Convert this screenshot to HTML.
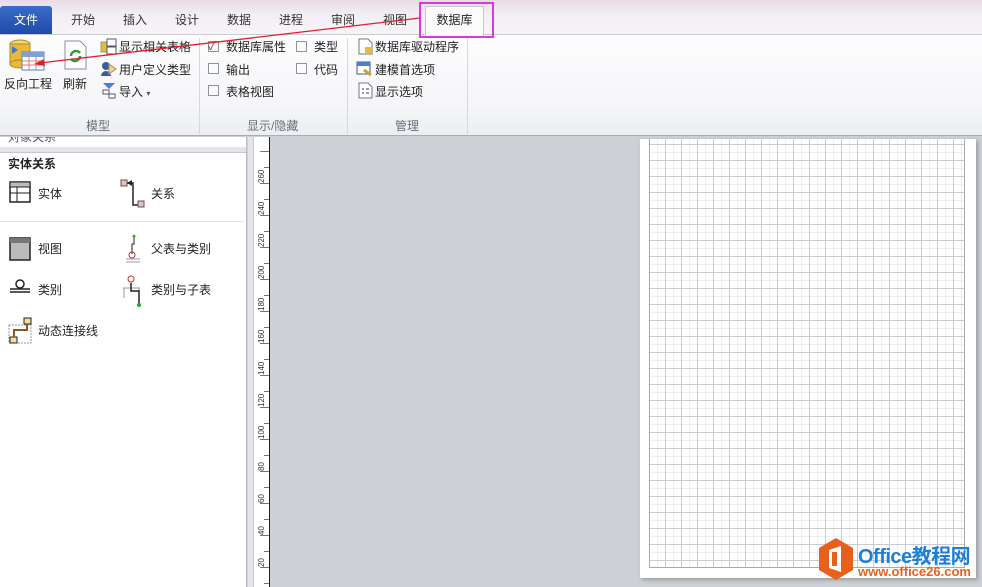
<!DOCTYPE html>
<html><head><meta charset="utf-8"><style>
*{margin:0;padding:0;box-sizing:border-box}
body{width:982px;height:587px;overflow:hidden;position:relative;background:#cdd0d5;font-family:"Liberation Sans","Noto Sans CJK SC",sans-serif;font-size:12px;color:#222}
.abs{position:absolute}
#title{left:0;top:0;width:982px;height:36px;background:linear-gradient(#e9dbe6,#f4eef4 40%,#f7f5f8)}
.tab{position:absolute;top:11px;font-size:12px;color:#333}
#file{left:0;top:6px;width:52px;height:28px;background:linear-gradient(#3b6cc8,#1f4aa8);color:#fff;text-align:center;line-height:28px;border-radius:3px 3px 0 0;font-size:12px}
#dbtab{left:425px;top:6px;width:59px;height:30px;background:#fbfbfc;border:1px solid #c4c8d0;border-bottom:none;text-align:center;line-height:26px}
#mag{left:419px;top:2px;width:75px;height:36px;border:2px solid #d43bd9}
#ribbon{left:0;top:34px;width:982px;height:102px;background:linear-gradient(#fdfdfe,#f5f6f8 70%,#eceef1);border-top:1px solid #c9ccd2;border-bottom:1px solid #a9adb5}
.sep{position:absolute;top:38px;width:1px;height:96px;background:#d5d8dd}
.glab{position:absolute;top:117px;color:#6a6f78;font-size:12px}
.t{position:absolute;font-size:12px;color:#222;white-space:nowrap}
.cb{position:absolute;width:11px;height:11px;border:1px solid #8e939b;background:#fbfbfb}
#panel{left:0;top:137px;width:247px;height:450px;background:#fff;border-right:1px solid #b9bcc2;overflow:hidden}
#ruler{left:253px;top:137px;width:17px;height:450px;background:#fff;border-right:1px solid #222;border-left:1px solid #c8c8c8}
.rl{position:absolute;left:3px;font-size:8px;transform:rotate(-90deg);transform-origin:left top;color:#333}
.tk{position:absolute;right:0;height:1px;background:#777}
#page{left:640px;top:139px;width:336px;height:439px;background:#fff;box-shadow:2px 2px 4px #999}
#grid{left:649px;top:139px;width:316px;height:429px;border:1px solid #aaa;border-top:none;
background-image:linear-gradient(90deg,#c9ccd1 1px,transparent 1px),linear-gradient(#c9ccd1 1px,transparent 1px),linear-gradient(90deg,#eeeff1 1px,transparent 1px),linear-gradient(#eeeff1 1px,transparent 1px);
background-size:16px 16px,16px 16px,8px 8px,8px 8px;background-position:-1px 5px,-1px 5px,-1px 5px,-1px 5px}
</style></head><body>
<div class="abs" id="title"></div>
<div class="abs" id="file">文件</div>
<div class="tab" style="left:71px">开始</div>
<div class="tab" style="left:123px">插入</div>
<div class="tab" style="left:175px">设计</div>
<div class="tab" style="left:227px">数据</div>
<div class="tab" style="left:279px">进程</div>
<div class="tab" style="left:331px">审阅</div>
<div class="tab" style="left:383px">视图</div>
<div class="abs" id="ribbon"></div>
<div class="abs" id="dbtab">数据库</div>
<div class="abs" id="mag"></div>

<svg class="abs" style="left:8px;top:38px" width="40" height="38"><ellipse cx="12" cy="6" rx="10" ry="4" fill="#f5d472" stroke="#b08a1e"/><rect x="2" y="6" width="20" height="20" fill="#e8b93a" stroke="#b08a1e"/><ellipse cx="12" cy="26" rx="10" ry="4" fill="#e8b93a" stroke="#b08a1e"/><rect x="14" y="14" width="22" height="18" fill="#fff" stroke="#5b7fb4"/><rect x="14" y="14" width="22" height="5" fill="#7da2d6"/><path d="M14 23h22M14 27h22M21 19v13M28 19v13" stroke="#d48080"/><path d="M4 8l6 4-6 4z" fill="#3a78d0"/></svg>
<div class="t" style="left:4px;top:75px">反向工程</div>
<svg class="abs" style="left:64px;top:40px" width="24" height="30"><path d="M1 1h15l6 6v22H1z" fill="#fdfdfd" stroke="#8a8f98"/><path d="M7 16a5 5 0 0 1 9-3M16 16a5 5 0 0 1-9 3" stroke="#2e9a3a" stroke-width="2.5" fill="none"/></svg>
<div class="t" style="left:63px;top:75px">刷新</div>
<svg class="abs" style="left:100px;top:38px" width="17" height="17"><rect x="1" y="4" width="8" height="10" fill="#e8b93a" stroke="#8a6"/><rect x="7" y="1" width="9" height="7" fill="#fff" stroke="#557"/><rect x="7" y="9" width="9" height="7" fill="#fff" stroke="#557"/></svg>
<div class="t" style="left:119px;top:38px">显示相关表格</div>
<svg class="abs" style="left:100px;top:60px" width="17" height="17"><circle cx="6" cy="6" r="4" fill="#3b5c9c"/><path d="M1 16a5 5 0 0 1 10 0z" fill="#3b5c9c"/><path d="M9 4l7 5-7 5z" fill="#f2d67a" stroke="#a88"/></svg>
<div class="t" style="left:119px;top:61px">用户定义类型</div>
<svg class="abs" style="left:102px;top:82px" width="15" height="17"><path d="M1 1h12l-6 6z" fill="#4a7fd0"/><rect x="1" y="8" width="6" height="4" fill="#fff" stroke="#557"/><rect x="7" y="12" width="6" height="4" fill="#fff" stroke="#557"/></svg>
<div class="t" style="left:119px;top:83px">导入 <span style="font-size:8px;color:#555">▾</span></div>
<div class="glab" style="left:86px">模型</div>
<div class="sep" style="left:199px"></div>

<div class="cb" style="left:208px;top:41px"></div><div class="t" style="left:208px;top:37px;font-size:12px;color:#555">✓</div>
<div class="t" style="left:226px;top:38px">数据库属性</div>
<div class="cb" style="left:208px;top:63px"></div><div class="t" style="left:226px;top:61px">输出</div>
<div class="cb" style="left:208px;top:85px"></div><div class="t" style="left:226px;top:83px">表格视图</div>
<div class="cb" style="left:296px;top:41px"></div><div class="t" style="left:314px;top:38px">类型</div>
<div class="cb" style="left:296px;top:63px"></div><div class="t" style="left:314px;top:61px">代码</div>
<div class="glab" style="left:247px">显示/隐藏</div>
<div class="sep" style="left:347px"></div>

<svg class="abs" style="left:358px;top:38px" width="15" height="17"><path d="M1 1h9l4 4v11H1z" fill="#fff" stroke="#777"/><rect x="7" y="9" width="6" height="7" fill="#e8b93a"/></svg>
<div class="t" style="left:375px;top:38px">数据库驱动程序</div>
<svg class="abs" style="left:356px;top:60px" width="17" height="17"><rect x="1" y="2" width="13" height="12" fill="#fff" stroke="#557"/><rect x="1" y="2" width="13" height="4" fill="#4a7fd0"/><path d="M8 10l7 5" stroke="#c9a33a" stroke-width="3"/></svg>
<div class="t" style="left:375px;top:61px">建模首选项</div>
<svg class="abs" style="left:358px;top:82px" width="15" height="17"><path d="M1 1h9l4 4v11H1z" fill="#fff" stroke="#777"/><path d="M4 7h2M4 11h2M8 7h3M8 11h3" stroke="#335"/></svg>
<div class="t" style="left:375px;top:83px">显示选项</div>
<div class="glab" style="left:395px">管理</div>
<div class="sep" style="left:467px"></div>

<div class="abs" id="panel">
 <div class="t" style="left:8px;top:-9px;color:#555">对象关系</div>
 <div class="abs" style="left:0;top:10px;width:246px;height:6px;background:#e2e4e8;border-bottom:1px solid #c5c8ce"></div>
 <div class="t" style="left:8px;top:18px;font-weight:bold">实体关系</div>
 <svg class="abs" style="left:9px;top:44px" width="24" height="24"><rect x="1" y="1" width="20" height="20" fill="#fff" stroke="#222" stroke-width="1.5"/><rect x="1" y="1" width="20" height="5" fill="#bbb" stroke="#222"/><path d="M1 12h20M8 6v15" stroke="#222"/></svg>
 <div class="t" style="left:38px;top:48px">实体</div>
 <svg class="abs" style="left:120px;top:42px" width="28" height="30"><rect x="1" y="1" width="6" height="6" fill="#ccc" stroke="#844"/><path d="M7 4h6v22h5" stroke="#222" fill="none" stroke-width="1.5"/><path d="M7 4l5-3v6z" fill="#222"/><rect x="18" y="22" width="6" height="6" fill="#ccc" stroke="#844"/></svg>
 <div class="t" style="left:151px;top:48px">关系</div>
 <div class="abs" style="left:0;top:84px;width:244px;height:1px;background:#e3e3e3"></div>
 <svg class="abs" style="left:9px;top:100px" width="24" height="26"><rect x="1" y="1" width="20" height="22" fill="#bbb" stroke="#222" stroke-width="1.5"/><rect x="1" y="1" width="20" height="5" fill="#777"/></svg>
 <div class="t" style="left:38px;top:103px">视图</div>
 <svg class="abs" style="left:124px;top:97px" width="20" height="32"><path d="M10 2v8h-2v10" stroke="#222" fill="none"/><path d="M10 0l-2 3h4z" fill="#2a2"/><circle cx="8" cy="21" r="3" fill="none" stroke="#b33"/><path d="M2 25h14M2 28h14" stroke="#999"/></svg>
 <div class="t" style="left:151px;top:103px">父表与类别</div>
 <svg class="abs" style="left:9px;top:142px" width="22" height="14"><circle cx="11" cy="5" r="4" fill="#fff" stroke="#222" stroke-width="1.5"/><path d="M1 10h20M1 13h20" stroke="#222" stroke-width="1.5"/></svg>
 <div class="t" style="left:38px;top:144px">类别</div>
 <svg class="abs" style="left:122px;top:137px" width="24" height="34"><circle cx="9" cy="5" r="3" fill="none" stroke="#b33"/><path d="M1 14h17M2 14v10M17 14v10" stroke="#999"/><path d="M9 9v8h8v13" stroke="#222" fill="none" stroke-width="1.5"/><circle cx="17" cy="31" r="2" fill="#2a2"/></svg>
 <div class="t" style="left:151px;top:144px">类别与子表</div>
 <svg class="abs" style="left:8px;top:180px" width="26" height="28"><rect x="1" y="8" width="22" height="18" fill="none" stroke="#999" stroke-dasharray="2 1"/><rect x="16" y="1" width="7" height="6" fill="#f0e0a0" stroke="#222"/><rect x="2" y="20" width="7" height="6" fill="#f0e0a0" stroke="#222"/><path d="M19 7v6H6v7" stroke="#8a5a1a" fill="none" stroke-width="2"/></svg>
 <div class="t" style="left:38px;top:185px">动态连接线</div>
</div>
<div class="abs" style="left:248px;top:137px;width:5px;height:450px;background:#e4e6ea"></div>
<div class="abs" id="ruler">
<div class="tk" style="top:14px;width:9px"></div><div class="tk" style="top:30px;width:5px"></div><div class="tk" style="top:46px;width:9px"></div><div class="tk" style="top:62px;width:5px"></div><div class="tk" style="top:78px;width:9px"></div><div class="tk" style="top:94px;width:5px"></div><div class="tk" style="top:110px;width:9px"></div><div class="tk" style="top:126px;width:5px"></div><div class="tk" style="top:142px;width:9px"></div><div class="tk" style="top:158px;width:5px"></div><div class="tk" style="top:174px;width:9px"></div><div class="tk" style="top:190px;width:5px"></div><div class="tk" style="top:206px;width:9px"></div><div class="tk" style="top:222px;width:5px"></div><div class="tk" style="top:238px;width:9px"></div><div class="tk" style="top:254px;width:5px"></div><div class="tk" style="top:270px;width:9px"></div><div class="tk" style="top:286px;width:5px"></div><div class="tk" style="top:302px;width:9px"></div><div class="tk" style="top:318px;width:5px"></div><div class="tk" style="top:334px;width:9px"></div><div class="tk" style="top:350px;width:5px"></div><div class="tk" style="top:366px;width:9px"></div><div class="tk" style="top:382px;width:5px"></div><div class="tk" style="top:398px;width:9px"></div><div class="tk" style="top:414px;width:5px"></div><div class="tk" style="top:430px;width:9px"></div><div class="tk" style="top:446px;width:5px"></div>
<div class="rl" style="top:46px">260</div><div class="rl" style="top:78px">240</div><div class="rl" style="top:110px">220</div><div class="rl" style="top:142px">200</div><div class="rl" style="top:174px">180</div><div class="rl" style="top:206px">160</div><div class="rl" style="top:238px">140</div><div class="rl" style="top:270px">120</div><div class="rl" style="top:302px">100</div><div class="rl" style="top:334px">80</div><div class="rl" style="top:366px">60</div><div class="rl" style="top:398px">40</div><div class="rl" style="top:430px">20</div>
</div>
<div class="abs" id="page"></div>
<div class="abs" id="grid"></div>

<svg class="abs" style="left:817px;top:537px" width="38" height="44"><path d="M19 1l17 10v22l-17 10L2 33V11z" fill="#e8601c"/><path d="M12 13l12-4v26l-12-4z" fill="#fff"/><rect x="15" y="15" width="5" height="14" fill="#e8601c"/></svg>
<div class="t" style="left:858px;top:540px;font-size:20px;font-weight:bold;color:#1e7fd8;letter-spacing:-0.5px">Office教程网</div>
<div class="t" style="left:858px;top:564px;font-size:13px;font-weight:bold;color:#e8601c">www.office26.com</div>

<svg class="abs" style="left:0;top:0" width="500" height="100"><line x1="420" y1="18" x2="40" y2="63" stroke="#e02030" stroke-width="1.3"/><path d="M34 64l10-5 1 7z" fill="#e02030"/></svg>
</body></html>
